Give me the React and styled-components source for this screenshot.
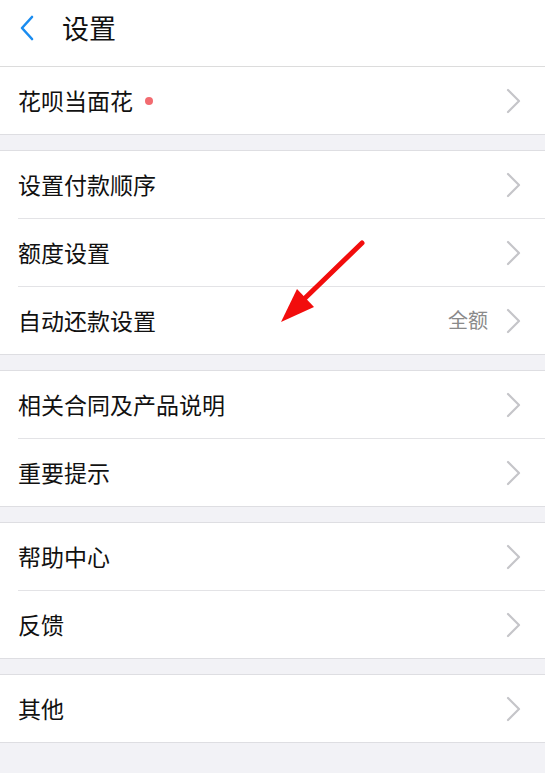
import React from 'react';
import styled, { createGlobalStyle } from 'styled-components';

const GlobalStyle = createGlobalStyle`
  html, body {
    margin: 0;
    padding: 0;
    background: #f2f2f6;
    font-family: "Noto Sans CJK SC", "Noto Sans", sans-serif;
  }
`;

const Page = styled.div`
  position: relative;
  min-height: 773px;
  background: #f2f2f6;
`;

const Header = styled.header`
  height: 67px;
  box-sizing: border-box;
  padding-top: 9px;
  display: flex;
  align-items: flex-start;
  background: #fff;
  border-bottom: 1px solid #dcdcdc;
`;

const Back = styled.button`
  height: 38px;
  border: 0;
  background: none;
  padding: 0 0 0 18px;
  display: flex;
  align-items: center;
`;

const Title = styled.h1`
  margin: 0 0 0 26px;
  line-height: 38px;
  font-size: 27px;
  font-weight: 400;
  color: #111;
`;

const Group = styled.section`
  background: #fff;
  border-top: ${({ $first }) => ($first ? 'none' : '1px solid #dedee2')};
  border-bottom: 1px solid #dedee2;
  margin-top: ${({ $first }) => ($first ? '0' : '15px')};
`;

const Row = styled.div`
  height: 67px;
  display: flex;
  align-items: center;
  margin-left: 18px;
  padding-right: 24px;
  & + & {
    border-top: 1px solid #e3e3e6;
  }
`;

const Label = styled.span`
  font-size: 23px;
  color: #111;
  flex: 1;
  display: flex;
  align-items: center;
  margin-top: -2px;
`;

const Dot = styled.i`
  width: 8px;
  height: 8px;
  border-radius: 50%;
  background: #f26b70;
  margin-left: 12px;
  margin-top: 2px;
`;

const Value = styled.span`
  font-size: 20px;
  color: #8a8a8a;
  margin-right: 18px;
  margin-top: -2px;
`;

const Chevron = () => (
  <svg width="15" height="26" viewBox="0 0 15 26">
    <path d="M2 2 L13 13 L2 24" fill="none" stroke="#c5c5c9" strokeWidth="2.2" strokeLinecap="round" strokeLinejoin="round" />
  </svg>
);

const Arrow = styled.svg`
  position: absolute;
  left: 0;
  top: 0;
  pointer-events: none;
`;

const groups = [
  [{ label: '花呗当面花', dot: true }],
  [{ label: '设置付款顺序' }, { label: '额度设置' }, { label: '自动还款设置', value: '全额' }],
  [{ label: '相关合同及产品说明' }, { label: '重要提示' }],
  [{ label: '帮助中心' }, { label: '反馈' }],
  [{ label: '其他' }],
];

export default function App() {
  return (
    <Page>
      <GlobalStyle />
      <Header>
        <Back aria-label="返回">
          <svg width="18" height="28" viewBox="0 0 18 28">
            <path d="M14 3 L4 14 L14 25" fill="none" stroke="#1a8cf0" strokeWidth="2.6" strokeLinecap="round" strokeLinejoin="round" />
          </svg>
        </Back>
        <Title>设置</Title>
      </Header>
      {groups.map((rows, gi) => (
        <Group key={gi} $first={gi === 0}>
          {rows.map((r) => (
            <Row key={r.label}>
              <Label>
                {r.label}
                {r.dot && <Dot />}
              </Label>
              {r.value && <Value>{r.value}</Value>}
              <Chevron />
            </Row>
          ))}
        </Group>
      ))}
      <Arrow width="545" height="773" viewBox="0 0 545 773">
        <line x1="362" y1="243" x2="300" y2="303" stroke="#f20d0d" strokeWidth="5" strokeLinecap="round" />
        <polygon points="281,322 297,289 314,307" fill="#f20d0d" />
      </Arrow>
    </Page>
  );
}
